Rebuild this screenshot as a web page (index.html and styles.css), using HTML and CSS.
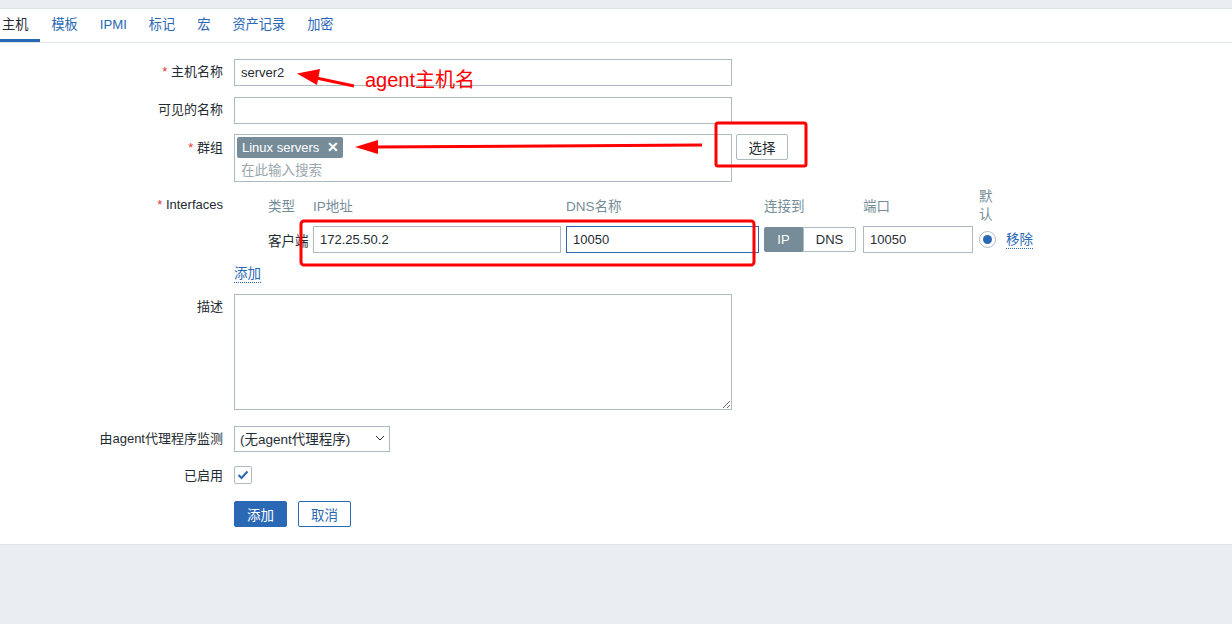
FILE: index.html
```html
<!DOCTYPE html>
<html lang="zh">
<head>
    <meta charset="UTF-8">
    <title>主机</title>
    <link rel="stylesheet" href="styles.css">
</head>
<body>

<div class="page">
    <div class="panel">
        <ul class="tabs">
            <li class="tab active">主机</li>
            <li class="tab">模板</li>
            <li class="tab">IPMI</li>
            <li class="tab">标记</li>
            <li class="tab">宏</li>
            <li class="tab">资产记录</li>
            <li class="tab">加密</li>
        </ul>

        <div class="form">
            <div class="row">
                <label class="label"><span class="req">*</span> 主机名称</label>
                <div class="field"><input class="input wide" type="text" value="server2"></div>
            </div>

            <div class="row">
                <label class="label">可见的名称</label>
                <div class="field"><input class="input wide" type="text"></div>
            </div>

            <div class="row">
                <label class="label"><span class="req">*</span> 群组</label>
                <div class="field group-field">
                    <div class="multiselect">
                        <span class="tag">Linux servers <span class="tag-x">✕</span></span>
                        <div class="placeholder">在此输入搜索</div>
                    </div>
                    <button class="btn-alt">选择</button>
                </div>
            </div>

            <div class="row row-iface">
                <label class="label label-iface"><span class="req">*</span> Interfaces</label>
                <div class="field">
                    <div class="iface">
                        <div class="iface-head">类型</div>
                        <div class="iface-head">IP地址</div>
                        <div class="iface-head">DNS名称</div>
                        <div class="iface-head">连接到</div>
                        <div class="iface-head port-head">端口</div>
                        <div class="iface-head narrow">默认</div>
                        <div></div>

                        <div class="iface-type">客户端</div>
                        <input class="input" type="text" value="172.25.50.2">
                        <input class="input focus" type="text" value="10050">
                        <div class="toggle"><span class="on">IP</span><span>DNS</span></div>
                        <input class="input port" type="text" value="10050">
                        <span class="radio"><span class="dot"></span></span>
                        <a class="link">移除</a>
                    </div>
                    <a class="link add-link">添加</a>
                </div>
            </div>

            <div class="row">
                <label class="label">描述</label>
                <div class="field"><textarea class="textarea"></textarea></div>
            </div>

            <div class="row row-gap">
                <label class="label">由agent代理程序监测</label>
                <div class="field">
                    <div class="select">(无agent代理程序)
                        <svg class="chev" width="10" height="6" viewBox="0 0 10 6"><path d="M1 1l4 4 4-4" fill="none" stroke="#1f2c33" stroke-width="1"/></svg>
                    </div>
                </div>
            </div>

            <div class="row">
                <label class="label">已启用</label>
                <div class="field">
                    <span class="checkbox">
                        <svg width="12" height="10" viewBox="0 0 12 10"><path d="M1.5 5l3 3 6-6.5" fill="none" stroke="#2a68b5" stroke-width="2"/></svg>
                    </span>
                </div>
            </div>

            <div class="row buttons">
                <div class="label"></div>
                <div class="field button-bar">
                    <button class="btn-main">添加</button>
                    <button class="btn-outline">取消</button>
                </div>
            </div>
        </div>
    </div>

    <!-- red annotations drawn on top of the screenshot -->
    <svg class="marks" width="1232" height="624" viewBox="0 0 1232 624">
        <line x1="354" y1="86" x2="314" y2="77.5" stroke="#f00" stroke-width="3"/>
        <polygon points="297,73.5 320,69 317,85" fill="#f00"/>
        <line x1="702" y1="145" x2="374" y2="147" stroke="#f00" stroke-width="3"/>
        <polygon points="355,147 378,140 378,154" fill="#f00"/>
        <rect x="716" y="123" width="90" height="43" rx="2" fill="none" stroke="#f00" stroke-width="3"/>
        <rect x="301" y="221" width="453" height="44" rx="3" fill="none" stroke="#f00" stroke-width="3"/>
    </svg>
    <div class="note">agent主机名</div>
</div>

</body>
</html>
```

FILE: styles.css
```css
body {
    margin: 0;
    background: #ebeef0;
    font-family: "Liberation Sans", Arial, "Noto Sans CJK SC", sans-serif;
    font-size: 13px;
    color: #1f2c33;
}

.page {
    position: relative;
    width: 1232px;
    height: 624px;
    padding-top: 8px;
    box-sizing: border-box;
}

.panel {
    background: #fff;
    border-top: 1px solid #dfe4e7;
    border-bottom: 1px solid #dfe4e7;
    padding-bottom: 17px;
}

/* tabs */
.tabs {
    display: flex;
    margin: 0;
    padding: 0;
    list-style: none;
    height: 33px;
    border-bottom: 1px solid #dfe4e7;
}

.tab {
    padding: 0 11px;
    line-height: 31px;
    font-size: 13.2px;
    color: #2a68b5;
    border-bottom: 3px solid transparent;
}

.tab.active {
    padding: 0 12px 0 2px;
    color: #1f2c33;
    border-bottom-color: #2a68b5;
}

/* form rows */
.form {
    padding-top: 16px;
}

.row {
    display: flex;
    margin-bottom: 11px;
}

.label {
    width: 223px;
    flex: none;
    margin-right: 11px;
    text-align: right;
    padding-top: 5px;
    line-height: 16px;
}

.req {
    color: #e33734;
}

.field {
    flex: 1;
}

.input {
    box-sizing: border-box;
    height: 27px;
    padding: 0 6px;
    border: 1px solid #acbbc2;
    font: inherit;
    color: #1f2c33;
    background: #fff;
    outline: none;
}

.input.wide {
    width: 498px;
}

.input.focus {
    border-color: #2a68b5;
}

/* groups */
.group-field {
    display: flex;
    align-items: flex-start;
    gap: 4px;
    margin-top: -1px;
}

.multiselect {
    box-sizing: border-box;
    width: 498px;
    height: 48px;
    border: 1px solid #acbbc2;
    padding: 2px;
}

.tag {
    display: inline-block;
    background: #768d99;
    color: #fff;
    line-height: 20px;
    padding: 0 4px 0 5px;
    border-radius: 2px;
}

.tag-x {
    font-weight: bold;
    font-size: 14px;
    margin-left: 4px;
}

.placeholder {
    color: #9aa6ad;
    padding: 1px 0 0 4px;
    font-size: 13.5px;
}

.btn-alt {
    height: 26px;
    width: 52px;
    background: #fff;
    border: 1px solid #acbbc2;
    border-radius: 2px;
    font: inherit;
    font-size: 13.5px;
    color: #1f2c33;
    padding: 0;
}

/* interfaces */
.row-iface {
    margin-top: -4px;
}

.label-iface {
    padding-top: 8px;
}

.iface {
    display: grid;
    grid-template-columns: 40px 248px 193px 92px 112px 17px auto;
    grid-template-rows: 36px 27px;
    column-gap: 5px;
    row-gap: 1px;
    margin-left: 34px;
    align-items: center;
}

.iface-head {
    color: #768d99;
    font-size: 13.5px;
    line-height: 18px;
    white-space: nowrap;
}

.iface-head.port-head {
    margin-left: 2px;
}

.iface-head.narrow {
    white-space: normal;
    width: 14px;
    margin: -3px 0 0 1px;
}

.iface-type {
    font-size: 13.5px;
    white-space: nowrap;
}

.toggle {
    display: flex;
    height: 25px;
}

.toggle span {
    box-sizing: border-box;
    line-height: 23px;
    border: 1px solid #acbbc2;
    text-align: center;
    width: 53px;
    border-radius: 0 2px 2px 0;
}

.toggle span.on {
    width: 39px;
    background: #768d99;
    border-color: #768d99;
    color: #fff;
    border-radius: 2px 0 0 2px;
}

.input.port {
    margin-left: 2px;
    width: 110px;
}

.radio {
    box-sizing: border-box;
    width: 17px;
    height: 17px;
    border: 1px solid #acbbc2;
    border-radius: 50%;
    display: flex;
    align-items: center;
    justify-content: center;
    margin: -1px 0 0 1px;
}

.dot {
    width: 9px;
    height: 9px;
    background: #2a68b5;
    border-radius: 50%;
}

.link {
    color: #2a68b5;
    font-size: 13.5px;
    border-bottom: 1px dotted #2a68b5;
    line-height: 17px;
    margin-left: 6px;
    justify-self: start;
}

.add-link {
    display: inline-block;
    margin: 12px 0 0 0;
}

.textarea {
    box-sizing: border-box;
    width: 498px;
    height: 116px;
    border: 1px solid #acbbc2;
    display: block;
    margin: 0;
}

.row-gap {
    margin-top: 16px;
}

.select {
    position: relative;
    box-sizing: border-box;
    width: 156px;
    height: 26px;
    border: 1px solid #acbbc2;
    line-height: 26px;
    padding-left: 5px;
    font-size: 13.5px;
}

.chev {
    position: absolute;
    right: 4px;
    top: 8px;
}

.checkbox {
    box-sizing: border-box;
    display: flex;
    align-items: center;
    justify-content: center;
    width: 18px;
    height: 18px;
    border: 1px solid #acbbc2;
    border-radius: 2px;
    margin-top: 3px;
}

.buttons {
    margin-top: 17px;
    margin-bottom: 0;
}

.button-bar {
    display: flex;
    gap: 11px;
}

.btn-main,
.btn-outline {
    box-sizing: border-box;
    height: 26px;
    width: 53px;
    font: inherit;
    font-size: 13.5px;
    border-radius: 2px;
    border: 1px solid #2a68b5;
    padding: 0;
}

.btn-main {
    background: #2a68b5;
    color: #fff;
}

.btn-outline {
    background: #fff;
    color: #2a68b5;
}

/* annotations */
.marks {
    position: absolute;
    top: 0;
    left: 0;
    pointer-events: none;
}

.note {
    position: absolute;
    left: 365px;
    top: 67px;
    color: #f00;
    font-size: 20px;
    line-height: 26px;
}
```
